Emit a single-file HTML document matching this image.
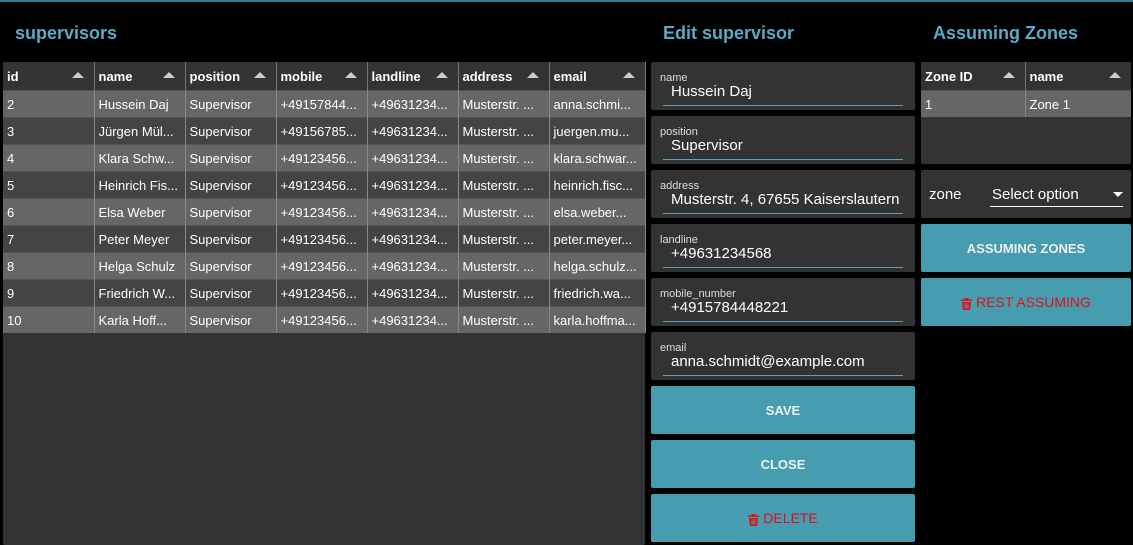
<!DOCTYPE html>
<html><head><meta charset="utf-8"><style>
*{box-sizing:border-box;margin:0;padding:0}
body{width:1133px;height:545px;background:#000;font-family:"Liberation Sans",sans-serif;color:#fff;position:relative;overflow:hidden}
.topline{position:absolute;left:0;top:0;width:1133px;height:2px;background:#2d7f95}
.title{position:absolute;top:23px;font-size:18px;color:#5aa9c9;font-weight:bold}
.panel{position:absolute;background:#333;border-radius:2px}
table{border-collapse:collapse;font-size:13px;table-layout:fixed}
th{height:28px;text-align:left;padding:2px 4px 0;font-weight:bold;border-right:1px solid #777;position:relative;background:#333}
th .ar{position:absolute;right:10px;top:10px;width:0;height:0;border-left:6px solid transparent;border-right:6px solid transparent;border-bottom:6px solid #ccc}
td{height:27px;padding:1px 4px 0;border-right:1px solid #888;border-top:1px solid #555;white-space:nowrap;overflow:hidden;text-overflow:ellipsis}
tr.l td{background:#666}
tr.d td{background:#444}
.field{position:absolute;left:651px;width:264px;height:48px;background:#333;border-radius:2px}
.field .lb{position:absolute;left:9px;top:10px;font-size:11px;color:#ddd}
.field .v{position:absolute;left:20px;top:21px;font-size:15px;white-space:nowrap;overflow:hidden;width:232px}
.field .u{position:absolute;left:12px;right:12px;top:43px;height:1px;background:#5aa0b8}
.btn{position:absolute;width:264px;height:48px;background:#479db0;border-radius:2px;display:flex;align-items:center;justify-content:center;font-weight:bold;font-size:13px;color:#eee}
.red{color:#e0101a;font-weight:normal;font-size:14px}
.trash{display:inline-block;margin-right:4px;position:relative;top:2px}
</style></head><body>
<div class="topline"></div>
<div class="title" style="left:15px">supervisors</div>
<div class="title" style="left:663px">Edit supervisor</div>
<div class="title" style="left:933px">Assuming Zones</div>

<div class="panel" style="left:3px;top:62px;width:642px;height:483px">
<table style="width:642px">
<colgroup><col style="width:91px"><col style="width:91px"><col style="width:91px"><col style="width:91px"><col style="width:91px"><col style="width:91px"><col style="width:96px"></colgroup>
<tr><th>id<span class="ar"></span></th><th>name<span class="ar"></span></th><th>position<span class="ar"></span></th><th>mobile<span class="ar"></span></th><th>landline<span class="ar"></span></th><th>address<span class="ar"></span></th><th>email<span class="ar"></span></th></tr>
<tr class="l"><td>2</td><td>Hussein Daj</td><td>Supervisor</td><td>+49157844...</td><td>+49631234...</td><td>Musterstr. ...</td><td>anna.schmi...</td></tr>
<tr class="d"><td>3</td><td>Jürgen Mül...</td><td>Supervisor</td><td>+49156785...</td><td>+49631234...</td><td>Musterstr. ...</td><td>juergen.mu...</td></tr>
<tr class="l"><td>4</td><td>Klara Schw...</td><td>Supervisor</td><td>+49123456...</td><td>+49631234...</td><td>Musterstr. ...</td><td>klara.schwar...</td></tr>
<tr class="d"><td>5</td><td>Heinrich Fis...</td><td>Supervisor</td><td>+49123456...</td><td>+49631234...</td><td>Musterstr. ...</td><td>heinrich.fisc...</td></tr>
<tr class="l"><td>6</td><td>Elsa Weber</td><td>Supervisor</td><td>+49123456...</td><td>+49631234...</td><td>Musterstr. ...</td><td>elsa.weber...</td></tr>
<tr class="d"><td>7</td><td>Peter Meyer</td><td>Supervisor</td><td>+49123456...</td><td>+49631234...</td><td>Musterstr. ...</td><td>peter.meyer...</td></tr>
<tr class="l"><td>8</td><td>Helga Schulz</td><td>Supervisor</td><td>+49123456...</td><td>+49631234...</td><td>Musterstr. ...</td><td>helga.schulz...</td></tr>
<tr class="d"><td>9</td><td>Friedrich W...</td><td>Supervisor</td><td>+49123456...</td><td>+49631234...</td><td>Musterstr. ...</td><td>friedrich.wa...</td></tr>
<tr class="l"><td>10</td><td>Karla Hoff...</td><td>Supervisor</td><td>+49123456...</td><td>+49631234...</td><td>Musterstr. ...</td><td>karla.hoffma...</td></tr>
</table>
</div>

<div class="field" style="top:62px"><div class="lb">name</div><div class="v">Hussein Daj</div><div class="u"></div></div>
<div class="field" style="top:116px"><div class="lb">position</div><div class="v">Supervisor</div><div class="u"></div></div>
<div class="field" style="top:170px"><div class="lb">address</div><div class="v">Musterstr. 4, 67655 Kaiserslautern</div><div class="u"></div></div>
<div class="field" style="top:224px"><div class="lb">landline</div><div class="v">+49631234568</div><div class="u"></div></div>
<div class="field" style="top:278px"><div class="lb">mobile_number</div><div class="v">+4915784448221</div><div class="u"></div></div>
<div class="field" style="top:332px"><div class="lb">email</div><div class="v">anna.schmidt@example.com</div><div class="u"></div></div>
<div class="btn" style="left:651px;top:386px">SAVE</div>
<div class="btn" style="left:651px;top:440px">CLOSE</div>
<div class="btn red" style="left:651px;top:494px"><svg class="trash" width="11" height="12" viewBox="0 0 11 12"><rect x="0" y="1.5" width="11" height="1.5" fill="#e0101a"/><rect x="3.5" y="0" width="4" height="2" fill="#e0101a"/><path d="M1 4h9l-1 8H2z" fill="#e0101a"/><path d="M4 5.5v5M5.5 5.5v5M7 5.5v5" stroke="#479db0" stroke-width="0.8"/></svg>DELETE</div>

<div class="panel" style="left:921px;top:62px;width:210px;height:102px">
<table style="width:210px">
<colgroup><col style="width:104px"><col style="width:106px"></colgroup>
<tr><th>Zone ID<span class="ar"></span></th><th style="border-right:none">name<span class="ar"></span></th></tr>
<tr class="l"><td>1</td><td style="border-right:none">Zone 1</td></tr>
</table>
</div>
<div class="panel" style="left:921px;top:170px;width:210px;height:48px">
<div style="position:absolute;left:8px;top:16px;font-size:15px">zone</div>
<div style="position:absolute;left:71px;top:16px;font-size:15px">Select option</div>
<div style="position:absolute;right:8px;top:22px;width:0;height:0;border-left:5px solid transparent;border-right:5px solid transparent;border-top:5px solid #fff"></div>
<div style="position:absolute;left:69px;right:8px;top:36px;height:1px;background:#fff"></div>
</div>
<div class="btn" style="left:921px;top:224px;width:210px">ASSUMING ZONES</div>
<div class="btn red" style="left:921px;top:278px;width:210px"><svg class="trash" width="11" height="12" viewBox="0 0 11 12"><rect x="0" y="1.5" width="11" height="1.5" fill="#e0101a"/><rect x="3.5" y="0" width="4" height="2" fill="#e0101a"/><path d="M1 4h9l-1 8H2z" fill="#e0101a"/><path d="M4 5.5v5M5.5 5.5v5M7 5.5v5" stroke="#479db0" stroke-width="0.8"/></svg>REST ASSUMING</div>
</body></html>
